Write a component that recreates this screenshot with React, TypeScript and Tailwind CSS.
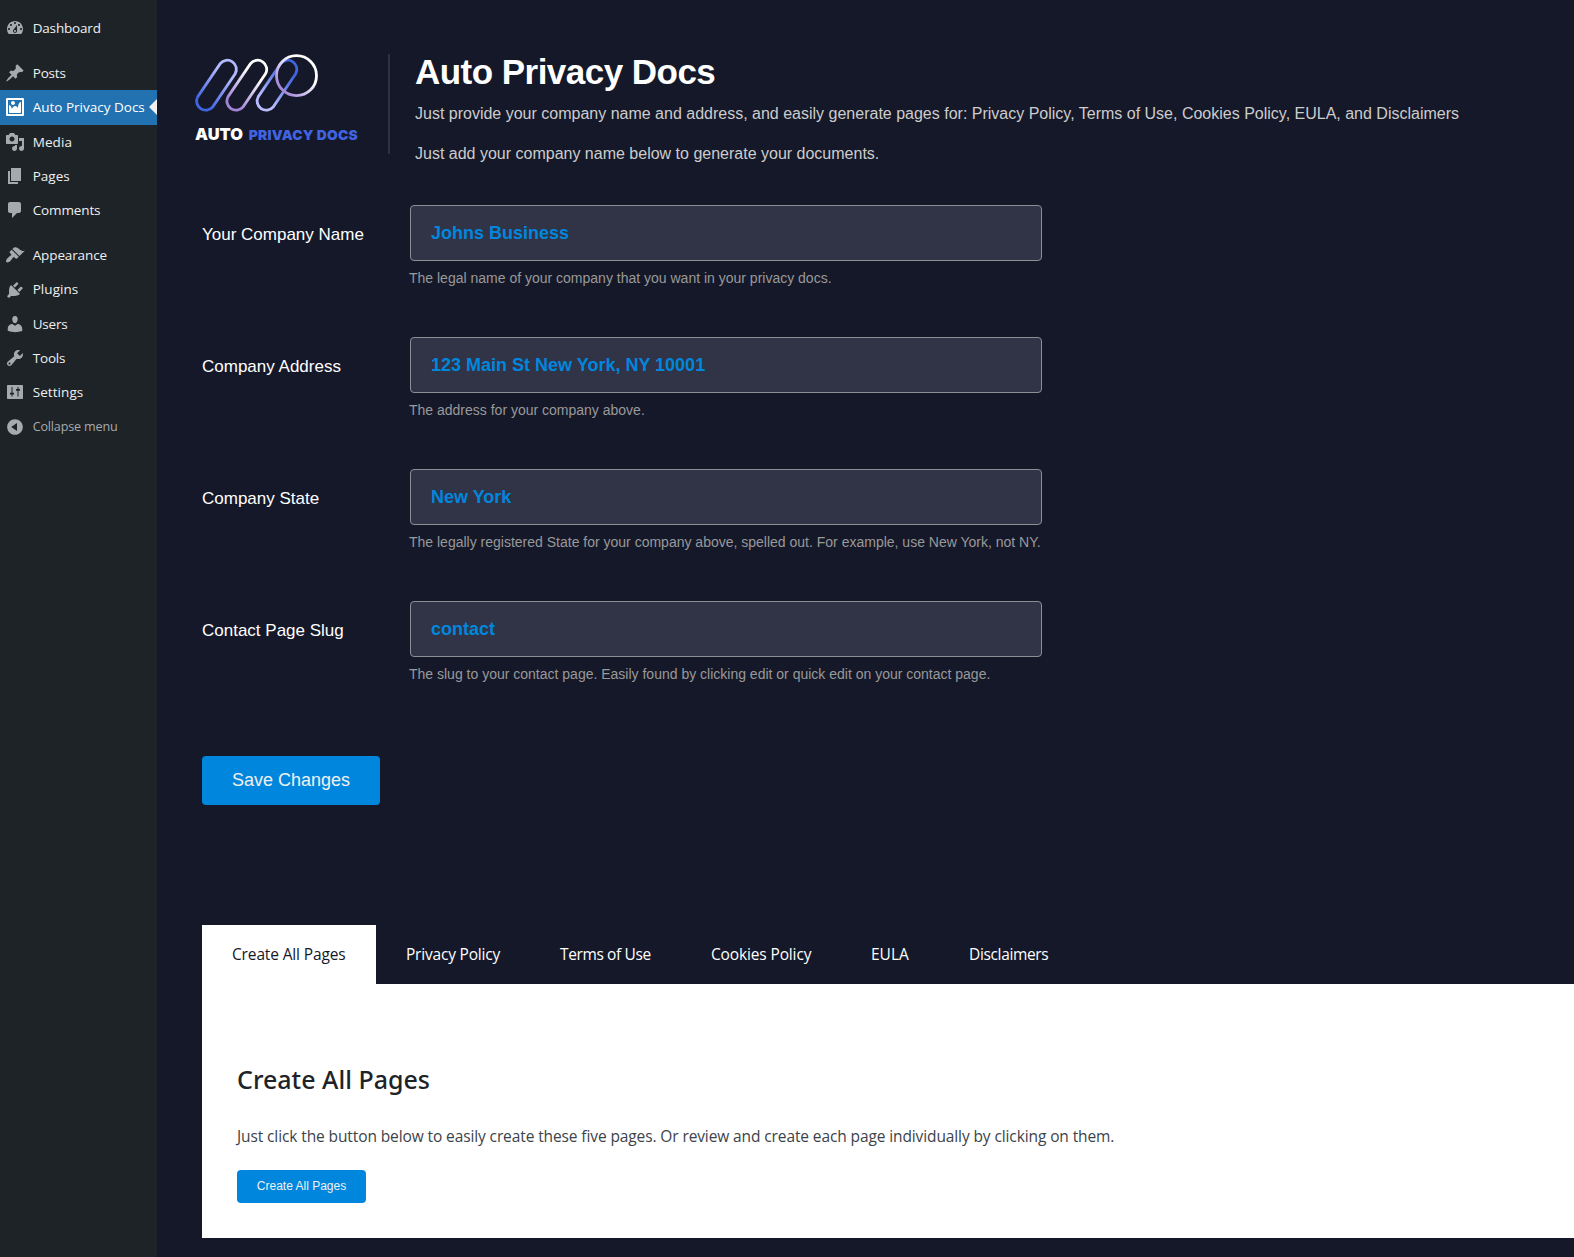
import React from "react";

type Item = { label: string; icon: string; tracking: string; active?: boolean; gap?: boolean };

const items: Item[] = [
  {
    label: "Dashboard",
    tracking: "tracking-[-0.18px]",
    icon: "M3.76 16h12.48c1.1-1.37 1.76-3.11 1.76-5 0-4.42-3.58-8-8-8s-8 3.58-8 8c0 1.89.66 3.63 1.76 5zM10 4c.55 0 1 .45 1 1s-.45 1-1 1-1-.45-1-1 .45-1 1-1zM6 6c.55 0 1 .45 1 1s-.45 1-1 1-1-.45-1-1 .45-1 1-1zm8 0c.55 0 1 .45 1 1s-.45 1-1 1-1-.45-1-1 .45-1 1-1zm-5.37 5.55L12 7v6c0 1.1-.9 2-2 2s-2-.9-2-2c0-.57.24-1.08.63-1.45zM4 10c.55 0 1 .45 1 1s-.45 1-1 1-1-.45-1-1 .45-1 1-1zm12 0c.55 0 1 .45 1 1s-.45 1-1 1-1-.45-1-1 .45-1 1-1zm-5 3c0-.55-.45-1-1-1s-1 .45-1 1 .45 1 1 1 1-.45 1-1z",
  },
  {
    label: "Posts",
    tracking: "tracking-[-0.18px]",
    gap: true,
    icon: "M10.44 3.02l1.82-1.82 6.36 6.35-1.83 1.82c-1.05-.68-2.48-.57-3.41.36l-.75.75c-.92.93-1.04 2.35-.35 3.41l-1.83 1.82-2.41-2.41-2.8 2.79c-.42.42-3.38 2.71-3.8 2.29s1.86-3.39 2.28-3.81l2.79-2.79L4.1 9.36l1.83-1.82c1.05.69 2.48.57 3.4-.36l.75-.75c.93-.92 1.05-2.35.36-3.41z",
  },
  {
    label: "Auto Privacy Docs",
    tracking: "tracking-[0px]",
    active: true,
    icon: "M2.25 1h15.5c.69 0 1.25.56 1.25 1.25v15.5c0 .69-.56 1.25-1.25 1.25H2.25C1.56 19 1 18.44 1 17.75V2.25C1 1.56 1.56 1 2.25 1zM17 17V3H3v14h14zM10 6c0-1.1-.9-2-2-2s-2 .9-2 2 .9 2 2 2 2-.9 2-2zm3 5s0-6 3-6v10c0 .55-.45 1-1 1H5c-.55 0-1-.45-1-1V8c2 0 3 4 3 4s1-3 3-3 3 2 3 2z",
  },
  {
    label: "Media",
    tracking: "tracking-[0.1px]",
    icon: "M13 11V4c0-.55-.45-1-1-1h-1.67L9 1H5L3.67 3H2c-.55 0-1 .45-1 1v7c0 .55.45 1 1 1h10c.55 0 1-.45 1-1zM7 4.5c1.38 0 2.5 1.12 2.5 2.5S8.38 9.5 7 9.5 4.5 8.38 4.5 7 5.62 4.5 7 4.5zM14 6h5v10.5c0 1.38-1.12 2.5-2.5 2.5S14 17.88 14 16.5s1.12-2.5 2.5-2.5c.17 0 .34.02.5.05V9h-3V6zm-4 8.05V13h2v3.5c0 1.38-1.12 2.5-2.5 2.5S7 17.88 7 16.5 8.12 14 9.5 14c.17 0 .34.02.5.05z",
  },
  { label: "Pages", tracking: "tracking-[0px]", icon: "M6 15V2h10v13H6zm-1 1h8v2H3V5h2v11z" },
  {
    label: "Comments",
    tracking: "tracking-[-0.13px]",
    icon: "M5 2h9c1.1 0 2 .9 2 2v7c0 1.1-.9 2-2 2h-2l-5 5v-5H5c-1.1 0-2-.9-2-2V4c0-1.1.9-2 2-2z",
  },
  {
    label: "Appearance",
    tracking: "tracking-[-0.12px]",
    gap: true,
    icon: "M14.48 11.06L7.41 3.99l1.5-1.5c.5-.56 2.3-.47 3.51.32 1.21.8 1.43 1.28 2.91 2.1 1.18.64 2.45 1.26 4.45.85zm-.71.71L6.7 4.7 4.93 6.47c-.39.39-.39 1.02 0 1.41l1.06 1.06c.39.39.39 1.03 0 1.42-.6.6-1.43 1.11-2.21 1.69-.35.26-.7.53-1.01.84C1.43 14.23.4 16.08 1.4 17.07c.99 1 2.84-.03 4.18-1.36.31-.31.58-.66.85-1.02.57-.78 1.08-1.61 1.69-2.21.39-.39 1.02-.39 1.41 0l1.06 1.06c.39.39 1.02.39 1.41 0z",
  },
  {
    label: "Plugins",
    tracking: "tracking-[0.05px]",
    icon: "M13.11 4.36L9.87 7.6 8 5.73l3.24-3.24c.35-.34 1.05-.2 1.56.32.52.51.66 1.21.31 1.55zm-8 1.77l.91-1.12 9.01 9.01-1.19.84c-.71.71-2.63 1.16-3.82 1.16H6.14L4.9 17.26c-.59.59-1.54.59-2.12 0-.59-.58-.59-1.53 0-2.12l1.24-1.24v-3.88c0-1.13.4-3.19 1.09-3.89zm7.26 3.97l3.24-3.24c.34-.35 1.04-.21 1.55.31.52.51.66 1.21.31 1.55l-3.24 3.25z",
  },
  {
    label: "Users",
    tracking: "tracking-[-0.2px]",
    icon: "M10 9.25c-2.27 0-2.73-3.44-2.73-3.44C7 4.02 7.82 2 9.97 2c2.16 0 2.98 2.02 2.71 3.81 0 0-.41 3.44-2.68 3.44zm0 2.57L12.72 10c2.39 0 4.52 2.33 4.52 4.53v2.49s-3.65 1.13-7.24 1.13c-3.65 0-7.24-1.13-7.24-1.13v-2.49c0-2.25 1.94-4.48 4.47-4.48z",
  },
  {
    label: "Tools",
    tracking: "tracking-[-0.17px]",
    icon: "M16.68 9.77c-1.34 1.34-3.3 1.67-4.95.99l-5.41 6.52c-.99.99-2.59.99-3.58 0s-.99-2.59 0-3.57l6.52-5.42c-.68-1.65-.35-3.61.99-4.95 1.28-1.28 3.12-1.62 4.72-1.06l-2.89 2.89 2.82 2.82 2.86-2.87c.53 1.58.18 3.39-1.08 4.65zM3.81 16.21c.4.39 1.04.39 1.43 0 .4-.4.4-1.04 0-1.43-.39-.4-1.03-.4-1.43 0-.39.39-.39 1.03 0 1.43z",
  },
  {
    label: "Settings",
    tracking: "tracking-[0.07px]",
    icon: "M2.800 3h14.400c.5 0 .8.3.8.8v12.400c0 .5-.3.8-.8.8H2.800c-.5 0-.8-.3-.8-.8V3.800c0-.5.3-.8.8-.8zM6.500 5v5.800H5v1.800h1.500V14.500h1V12.600H9v-1.800H7.500V5zM12.500 5v2H11v1.800h1.500V14.500h1V8.800H15V7h-1.500V5z",
  },
];

const fields = [
  { label: "Your Company Name", value: "Johns Business", help: "The legal name of your company that you want in your privacy docs." },
  { label: "Company Address", value: "123 Main St New York, NY 10001", help: "The address for your company above." },
  {
    label: "Company State",
    value: "New York",
    help: "The legally registered State for your company above, spelled out. For example, use New York, not NY.",
  },
  {
    label: "Contact Page Slug",
    value: "contact",
    help: "The slug to your contact page. Easily found by clicking edit or quick edit on your contact page.",
  },
];

const tabs = [
  { label: "Create All Pages", cls: "w-[174px] tracking-[-0.14px] bg-white text-[#151829]" },
  { label: "Privacy Policy", cls: "w-[154px] tracking-[-0.2px] text-white" },
  { label: "Terms of Use", cls: "w-[151px] tracking-[-0.38px] text-white" },
  { label: "Cookies Policy", cls: "w-[160px] tracking-[-0.14px] text-white" },
  { label: "EULA", cls: "w-[98px] text-white" },
  { label: "Disclaimers", cls: "w-[140px] tracking-[-0.35px] text-white" },
];

function MenuIcon({ d, className }: { d: string; className: string }) {
  return (
    <svg viewBox="0 0 20 20" className={`size-5 shrink-0 ${className}`} fill="currentColor">
      <path d={d} />
    </svg>
  );
}

function Sidebar() {
  return (
    <nav className="w-[157px] shrink-0 bg-[#1d2327] pt-[10.6px] font-['Open_Sans',sans-serif] text-[13.5px] text-[#f0f0f1]">
      {items.map((it) => (
        <div
          key={it.label}
          className={`relative flex items-center gap-[7.7px] pl-[5px] whitespace-nowrap ${it.gap ? "mt-[11px]" : ""} ${
            it.active ? "h-[34.8px] bg-[#2271b1] text-white" : "h-[34.2px]"
          }`}
        >
          <MenuIcon d={it.icon} className={it.active ? "text-white" : "text-[#a7aaad]"} />
          <span className={it.tracking}>{it.label}</span>
          {it.active && (
            <span className="absolute top-1/2 right-0 -translate-y-1/2 border-y-8 border-r-8 border-y-transparent border-r-[#f0f0f1]" />
          )}
        </div>
      ))}
      <div className="flex h-[35.4px] items-center gap-[7.7px] pl-[5px] text-[12.6px] text-[#a7aaad]">
        <MenuIcon
          className="text-[#a7aaad]"
          d="M10 2.16c4.33 0 7.84 3.51 7.84 7.84s-3.51 7.84-7.84 7.84S2.16 14.33 2.16 10 5.71 2.16 10 2.16zm2 11.72V6.12L6.18 9.97z"
        />
        <span className="tracking-[-0.17px]">Collapse menu</span>
      </div>
    </nav>
  );
}

const CAPSULE = "M17.8 56.6L40.2 23.6A9.1 9.1 0 0 1 55.2 33.8L32.8 66.8A9.1 9.1 0 0 1 17.8 56.6Z";

function Logo() {
  return (
    <svg viewBox="0 0 200 120" className="h-[120px] w-[200px] shrink-0" fill="none" strokeWidth="2.8">
      <defs>
        <linearGradient id="g1" gradientUnits="userSpaceOnUse" x1="18" y1="66" x2="54" y2="24">
          <stop offset="0.1" stopColor="#4064e0" />
          <stop offset="0.75" stopColor="#b4b9ff" />
        </linearGradient>
        <linearGradient id="g2" gradientUnits="userSpaceOnUse" x1="18" y1="66" x2="54" y2="24">
          <stop offset="0.1" stopColor="#a184d6" />
          <stop offset="0.75" stopColor="#ffffff" />
        </linearGradient>
        <linearGradient id="g3" gradientUnits="userSpaceOnUse" x1="18" y1="66" x2="54" y2="24">
          <stop offset="0.15" stopColor="#b9bdff" />
          <stop offset="0.8" stopColor="#4064e0" />
        </linearGradient>
        <linearGradient id="g4" gradientUnits="userSpaceOnUse" x1="101" y1="50" x2="128" y2="24">
          <stop offset="0" stopColor="#a184d6" />
          <stop offset="0.8" stopColor="#ffffff" />
        </linearGradient>
      </defs>
      <path d={CAPSULE} stroke="url(#g1)" />
      <path d={CAPSULE} stroke="url(#g2)" transform="translate(30.3 0)" />
      <path d={CAPSULE} stroke="url(#g3)" transform="translate(60.5 0)" />
      <circle cx="116.5" cy="35.7" r="20" stroke="url(#g4)" />
      <g stroke="none" className="font-['Inter',sans-serif] font-black">
        <text x="15" y="100.2" fontSize="16.4" fill="#ffffff">
          AUTO
        </text>
        <text x="68.7" y="100.2" fontSize="13.8" letterSpacing="0.25" fill="#4064e0">
          PRIVACY DOCS
        </text>
      </g>
    </svg>
  );
}

export default function App() {
  return (
    <div className="flex h-[1257px] w-[1574px] overflow-hidden bg-[#151829] font-['Liberation_Sans',Arial,sans-serif]">
      <Sidebar />
      <main className="min-w-0 flex-1">
        <header className="flex h-[165px] items-start pt-10 pl-[23px]">
          <Logo />
          <div className="mt-[14px] ml-2 h-[100px] w-[2px] bg-[#2f3143]" />
          <div className="mt-3 ml-[25px] whitespace-nowrap">
            <h1 className="text-[35px] leading-10 font-bold tracking-[-0.53px] text-white">Auto Privacy Docs</h1>
            <p className="mt-[10px] text-base text-[#cccccc]">
              Just provide your company name and address, and easily generate pages for: Privacy Policy, Terms of Use,
              Cookies Policy, EULA, and Disclaimers
            </p>
            <p className="mt-4 text-base text-[#cccccc]">Just add your company name below to generate your documents.</p>
          </div>
        </header>

        <div className="pt-10 pl-[45px]">
          {fields.map((f) => (
            <div key={f.label} className="flex h-[132px]">
              <label className="w-[207px] pt-[18px] text-[17px] leading-6 text-white">{f.label}</label>
              <div className="whitespace-nowrap">
                <input
                  type="text"
                  defaultValue={f.value}
                  className="ml-px block h-14 w-[632px] rounded-[4px] border border-[#8c8f94] bg-[#313346] px-5 text-[18px] font-bold text-[#0087dd] outline-none"
                />
                <p className="mt-[7px] text-sm text-[#999999]">{f.help}</p>
              </div>
            </div>
          ))}
          <button className="mt-[23px] block h-[49px] w-[178px] rounded-[4px] bg-[#0087dd] pb-px text-[18px] text-[#f0f0f1]">
            Save Changes
          </button>
        </div>

        <section className="mt-[120px] ml-[45px] font-['Open_Sans',sans-serif]">
          <div className="flex h-[59px] text-[15.5px]">
            {tabs.map((t) => (
              <div key={t.label} className={`flex shrink-0 items-center pl-[30px] whitespace-nowrap ${t.cls}`}>
                {t.label}
              </div>
            ))}
          </div>
          <div className="h-[254px] bg-white pt-[79px] pl-[35px]">
            <h2 className="font-['Noto_Sans','Open_Sans',sans-serif] text-[25px] leading-8 font-medium text-[#1d2327]">
              Create All Pages
            </h2>
            <p className="mt-[29px] text-[15.5px] leading-6 tracking-[-0.11px] text-[#3c434a]">
              Just click the button below to easily create these five pages. Or review and create each page individually
              by clicking on them.
            </p>
            <button className="mt-[22px] block h-[33px] w-[129px] rounded-[4px] bg-[#0087dd] pb-px font-['Liberation_Sans',Arial,sans-serif] text-xs text-[#f0f0f1]">
              Create All Pages
            </button>
          </div>
        </section>
      </main>
    </div>
  );
}
